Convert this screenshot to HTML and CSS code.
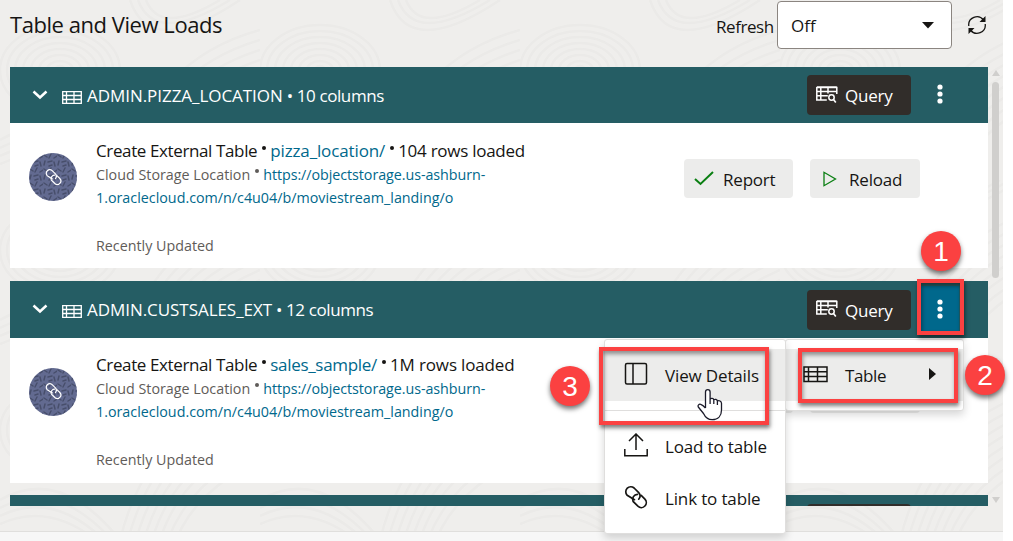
FILE: index.html
```html
<!DOCTYPE html>
<html lang="en">
<head>
<meta charset="utf-8">
<title>Table and View Loads</title>
<link rel="stylesheet" href="styles.css">
</head>
<body>
<svg class="defs" width="0" height="0" aria-hidden="true">
  <defs>
    <pattern id="rings" width="260" height="180" patternUnits="userSpaceOnUse">
      <g fill="none" stroke="#ebeae8" stroke-width="2.500">
        <ellipse cx="60" cy="70" rx="5" ry="4"/><ellipse cx="60" cy="70" rx="13" ry="9"/><ellipse cx="60" cy="70" rx="21" ry="15"/><ellipse cx="60" cy="70" rx="29" ry="21"/><ellipse cx="60" cy="70" rx="37" ry="27"/><ellipse cx="60" cy="70" rx="45" ry="33"/><ellipse cx="60" cy="70" rx="53" ry="39"/><ellipse cx="60" cy="70" rx="60" ry="45"/>
        <path d="M120 180Q150 60 260 30M128 180Q157 70 260 40M136 180Q164 80 260 50M144 180Q170 90 260 60M152 180Q176 100 260 70M160 180Q182 110 260 80M168 180Q190 120 260 90M176 180Q196 130 260 100M130 0Q150 60 240 0M138 0Q155 46 230 0M146 0Q160 36 220 0M0 140Q60 105 120 180M0 148Q56 118 112 180M0 156Q52 130 104 180M0 164Q48 142 96 180"/>
      </g>
    </pattern>
    <pattern id="dashes" width="14" height="14" patternUnits="userSpaceOnUse">
      <path d="M1 2l3 2M8 1l-2 4M11 5l3-2M2 8l-1 4M5 9l4-1M11 9l1 4M6 13l3-1" stroke="#474e6b" stroke-width="1.500" fill="none" stroke-linecap="round"/>
    </pattern>
    <symbol id="i-chev" viewBox="0 0 16 10"><path d="M1.500 1.500L8 7.500l6.500-6" fill="none" stroke="currentColor" stroke-width="2.500"/></symbol>
    <symbol id="i-table" viewBox="0 0 25 17"><path d="M1 1h23v14.500H1zM1 5.700h23M1 10.500h23M5.500 1v14.500M14.500 1v14.500" fill="none" stroke="currentColor" stroke-width="1.500"/></symbol>
    <symbol id="i-tables" viewBox="0 0 20 13"><path d="M.7.7h18.600v11.600H.7zM.7 4.500h18.600M.7 8.500h18.600M4.500.7v11.600M12 .7v11.600" fill="none" stroke="currentColor" stroke-width="1.300"/></symbol>
    <symbol id="i-query" viewBox="0 0 22 18"><path d="M.8 1.500h20v6.500M.8 1v13h10M.8 5.500h20M.8 9.700h11M4.800 1.500V14M12 1.500v6M.8 1h20" fill="none" stroke="currentColor" stroke-width="1.500"/><circle cx="15.500" cy="11.500" r="2.700" fill="none" stroke="currentColor" stroke-width="1.500"/><path d="M17.300 13.300l2.500 3.200" stroke="currentColor" stroke-width="1.600"/></symbol>
    <symbol id="i-dots" viewBox="0 0 6 20"><g fill="currentColor"><circle cx="3" cy="3" r="2.600"/><circle cx="3" cy="10" r="2.600"/><circle cx="3" cy="17" r="2.600"/></g></symbol>
    <symbol id="i-link" viewBox="0 0 24 24"><g fill="none" stroke="currentColor" stroke-width="1.700" stroke-linecap="round"><path d="M10.500 14.700L3.200 10.300A5 5 0 0 1 3.300 3.200a5 5 0 0 1 6.800-.2l4.600 4.600a5 5 0 0 1 0 6.600"/><path d="M13.500 9.300a5 5 0 0 0-4.400 7.100l4.800 4.800a5 5 0 0 0 7-.2 5 5 0 0 0 0-6.900l-3.700-3.700"/></g></symbol>
    <symbol id="i-check" viewBox="0 0 20 15"><path d="M1 8l5.500 5L19 1" fill="none" stroke="currentColor" stroke-width="2"/></symbol>
    <symbol id="i-play" viewBox="0 0 14 16"><path d="M1 1.300v13.400L12.500 8z" fill="none" stroke="currentColor" stroke-width="1.300"/></symbol>
  </defs>
</svg>
<main class="page">
  <svg class="backdrop" aria-hidden="true"><rect width="100%" height="100%" fill="url(#rings)"/></svg>
  <header class="topbar">
    <h1 class="title">Table and View Loads</h1>
    <label class="refresh-label">Refresh</label>
    <div class="select"><span>Off</span><svg width="12" height="7"><path d="M0 0h12L6 6.500z" fill="#161513"/></svg></div>
    <svg class="reload-icon" width="20" height="20" viewBox="0 0 20 20"><g fill="none" stroke="#161513" stroke-width="1.300"><path d="M1.800 11A8.200 8.200 0 0 1 16.500 5M18.200 9A8.200 8.200 0 0 1 3.500 15"/></g><path d="M18.500 1v6h-6zM1.500 19v-6h6z" fill="#161513"/></svg>
  </header>
  <div class="scroller">
    <div class="list">
      <section class="card">
        <div class="card-head">
          <svg class="chev" width="16" height="10"><use href="#i-chev"/></svg>
          <svg class="tbl" width="20" height="13"><use href="#i-tables"/></svg>
          <h2 class="name"><span class="n1">ADMIN.PIZZA_LOCATION</span> • 10 columns</h2>
          <button class="query"><svg width="22" height="18"><use href="#i-query"/></svg><span>Query</span></button>
          <button class="more"><svg width="6" height="20"><use href="#i-dots"/></svg></button>
        </div>
        <div class="card-body">
          <svg class="avatar" width="48" height="48"><circle cx="24" cy="24" r="24" fill="#626a90"/><circle cx="24" cy="24" r="24" fill="url(#dashes)"/><use href="#i-link" x="16" y="15.500" width="17" height="17" color="#fff"/></svg>
          <div class="info">
            <p class="line main"><span class="job">Create External Table</span><i class="dot"></i><a class="src s1">pizza_location/</a><i class="dot"></i><span class="rows r1">104 rows loaded</span></p>
            <p class="line sub"><span class="loc">Cloud Storage Location</span><i class="dot small"></i><a class="u1">https://objectstorage.us-ashburn-</a></p>
            <p class="line sub"><a class="u2">1.oraclecloud.com/n/c4u04/b/moviestream_landing/o</a></p>
            <p class="line note">Recently Updated</p>
          </div>
          <div class="actions">
            <button class="btn report"><svg width="20" height="15"><use href="#i-check"/></svg><span>Report</span></button>
            <button class="btn reload"><svg width="14" height="16"><use href="#i-play"/></svg><span>Reload</span></button>
          </div>
        </div>
      </section>
      <section class="card second">
        <div class="card-head">
          <svg class="chev" width="16" height="10"><use href="#i-chev"/></svg>
          <svg class="tbl" width="20" height="13"><use href="#i-tables"/></svg>
          <h2 class="name"><span class="n2">ADMIN.CUSTSALES_EXT</span> • 12 columns</h2>
          <button class="query"><svg width="22" height="18"><use href="#i-query"/></svg><span>Query</span></button>
          <button class="more active"><svg width="6" height="20"><use href="#i-dots"/></svg></button>
        </div>
        <div class="card-body">
          <svg class="avatar" width="48" height="48"><circle cx="24" cy="24" r="24" fill="#626a90"/><circle cx="24" cy="24" r="24" fill="url(#dashes)"/><use href="#i-link" x="16" y="14.500" width="17" height="17" color="#fff"/></svg>
          <div class="info">
            <p class="line main"><span class="job">Create External Table</span><i class="dot"></i><a class="src s2">sales_sample/</a><i class="dot"></i><span class="rows r2">1M rows loaded</span></p>
            <p class="line sub"><span class="loc">Cloud Storage Location</span><i class="dot small"></i><a class="u1">https://objectstorage.us-ashburn-</a></p>
            <p class="line sub"><a class="u2">1.oraclecloud.com/n/c4u04/b/moviestream_landing/o</a></p>
            <p class="line note">Recently Updated</p>
          </div>
          <div class="actions">
            <button class="btn report" aria-label="Report"></button>
            <button class="btn reload" aria-label="Reload"></button>
          </div>
        </div>
      </section>
      <section class="card third"><div class="card-head"><div class="query"></div></div></section>
    </div>
    <div class="scrollbar">
      <svg width="8" height="6"><path d="M0 6L4 0l4 6z" fill="#d0cfcd"/></svg>
      <div class="thumb"></div>
      <svg class="down" width="8" height="6"><path d="M0 0l4 6 4-6z" fill="#d0cfcd"/></svg>
    </div>
  </div>
  <footer class="foot"></footer>
</main>

<div class="menu menu-main">
  <div class="item on"><svg width="25" height="17"><use href="#i-table"/></svg><span class="t-table">Table</span><svg class="arrow" width="7" height="12"><path d="M0 0v12l7-6z" fill="#161513"/></svg></div>
</div>
<div class="menu menu-sub">
  <div class="item on"><svg width="24" height="24" viewBox="0 0 24 24"><rect x="1.500" y="1.500" width="21" height="20.500" rx="1.500" fill="none" stroke="#161513" stroke-width="1.500"/><path d="M9 1.500V22" stroke="#161513" stroke-width="1.500"/></svg><span class="t-view">View Details</span></div>
  <hr class="sep">
  <div class="item"><svg width="24" height="24" viewBox="0 0 24 24"><path d="M.8 16v6.700h22.400V16M12 17V1.500M5 8l7-7 7 7" fill="none" stroke="#161513" stroke-width="1.500"/></svg><span class="t-load">Load to table</span></div>
  <div class="item"><svg width="24" height="24"><use href="#i-link"/></svg><span class="t-link">Link to table</span></div>
</div>
<div class="mark m1"></div>
<div class="mark m2"></div>
<div class="mark m3"></div>
<div class="step p1">1</div>
<div class="step p2">2</div>
<div class="step p3">3</div>
<svg class="cursor" width="26" height="33" viewBox="0 0 26 33"><path d="M8.500 20V4a2.300 2.300 0 0 1 4.600 0v7c1-1 3.300-.8 3.700.8 1.200-.9 3.300-.4 3.600 1.200 1.700-.7 3.900 0 4.100 2.200V22c0 6-3.500 9.700-9.300 9.700-4.800 0-7.200-3-8.700-6.200L1.300 19c-.8-1.700.7-3.200 2.400-2.700 2 .6 3.300 2 4.800 3.700M13.100 11v5M16.800 12v4M20.400 13v4" fill="#fff" stroke="#1b1b2a" stroke-width="1.300" stroke-linejoin="round"/></svg>
</body>
</html>
```

FILE: styles.css
```css
* { box-sizing: border-box; }
body { margin: 0; width: 1013px; height: 541px; overflow: hidden; position: relative; background: #fff; color: #161513; font-family: "Open Sans", "Noto Sans", sans-serif; font-size: 17px; }
h1, h2, p { margin: 0; font-weight: 400; }
svg { display: block; flex: none; }
button { border: 0; padding: 0; font: inherit; }
.defs { position: absolute; }
.page { width: 1003px; height: 541px; display: flex; flex-direction: column; background: #efeeec; position: relative; }
.backdrop { position: absolute; inset: 0; width: 100%; height: 100%; }
.topbar, .scroller, .foot { position: relative; }
.topbar { height: 67px; display: flex; align-items: flex-start; padding-left: 10px; white-space: nowrap; }
.title { width: 706px; font-size: 22px; line-height: 30px; padding-top: 9px; letter-spacing: -.45px; }
.refresh-label { width: 61px; line-height: 26px; padding-top: 14px; letter-spacing: -.45px; }
.select { width: 175px; height: 48px; margin-top: 1px; padding: 0 17px 0 13px; border: 1px solid #8b8580; border-radius: 4px; background: #fff; display: flex; align-items: center; justify-content: space-between; }
.reload-icon { margin: 15px 0 0 15px; }
.scroller { height: 439px; display: flex; padding-left: 10px; overflow: hidden; }
.list { width: 978px; flex: none; display: flex; flex-direction: column; gap: 13px; }
.card { flex: none; background: #fff; }
.card-head { height: 56px; background: #255d64; color: #fff; display: flex; align-items: center; padding-left: 22px; }
.second .card-head { height: 57px; }
.chev { margin-top: -1px; }
.tbl { margin: 4px 5px 0 14px; }
.name { width: 720px; font-size: 17px; white-space: nowrap; line-height: 24px; margin-top: 1px; letter-spacing: -.4px; }
.n1 { letter-spacing: -.05px; }
.n2 { letter-spacing: -.05px; }
.query { width: 104px; height: 40px; border-radius: 4px; background: #312d2a; color: #fff; display: flex; align-items: center; gap: 7px; padding-left: 9px; }
.query span { padding-top: 1px; letter-spacing: -.2px; }
.query svg { margin-top: -1px; }
.more { width: 39px; height: 48px; margin-left: 9px; background: none; color: #fff; display: flex; align-items: center; justify-content: center; }
.more svg { margin-top: -2px; }
.more.active { background: #00688c; }
.card-body { height: 145px; display: flex; align-items: flex-start; padding: 16px 0 0 19px; }
.avatar { margin-top: 14px; }
.info { width: 588px; padding-left: 19px; white-space: nowrap; }
.second .info { margin-top: -1px; }
.line { height: 23px; line-height: 24px; display: flex; }
.main { height: 24px; }
.job { letter-spacing: -.38px; }
.s1 { letter-spacing: -.13px; }
.s2 { letter-spacing: -.3px; }
.r1 { letter-spacing: -.27px; }
.r2 { letter-spacing: -.15px; }
.sub, .note { font-size: 14.3px; color: #5f5c59; }
.u1 { letter-spacing: -.06px; }
.note { margin-top: 25px; }
.line a { color: #00688c; }
.dot { width: 4px; height: 4px; border-radius: 50%; background: #161513; margin: 7px 4px 0 5px; }
.dot.small { background: #5f5c59; margin: 6px 4px 0 5px; }
.actions { display: flex; gap: 17px; padding: 20px 0 0 0; margin-left: 19px; }
.btn { width: 109px; height: 39px; border-radius: 4px; background: #ececeb; display: flex; align-items: center; color: #161513; }
.btn svg { color: #0a7f12; }
.report { padding-left: 10px; gap: 9px; }
.reload { width: 110px; padding-left: 13px; gap: 12px; }
.btn span { padding-top: 2px; letter-spacing: -.2px; }
.third { margin-top: -1px; }
.third .card-head { align-items: flex-start; }
.third .query { margin: 9px 0 0 775px; }
.scrollbar { width: 15px; padding: 3px 0 3px 0; display: flex; flex-direction: column; align-items: center; }
.thumb { width: 7px; height: 196px; margin-top: 6px; border-radius: 4px; background: #d0cfcd; }
.down { margin-top: auto; }
.foot { margin-top: 25px; flex: 1; border-top: 1px solid #e0dfdd; background: #f7f7f7; }
.menu { position: absolute; background: #fff; border: 1px solid #dfdedd; border-radius: 3px; box-shadow: 0 4px 8px rgba(0,0,0,.16); padding-top: 9px; white-space: nowrap; }
.menu-main { left: 785px; top: 339px; width: 179px; height: 72px; }
.menu-sub { left: 604px; top: 339px; width: 182px; height: 195px; }
.item { height: 52px; display: flex; align-items: center; gap: 17px; padding-left: 19px; }
.item svg { margin-top: -2px; }
.item.on { background: #ececeb; }
.item span { letter-spacing: -.15px; }
.menu-main .item { padding-left: 17px; }
.menu-main .item span { letter-spacing: -.4px; }
.menu-main .arrow { margin-left: 26px; }
.sep { margin: 9px 0 9px; border: 0; border-top: 1px solid #dfdedd; }
.mark { position: absolute; border: 4px solid #fb4141; box-shadow: 1px 3px 4px rgba(0,0,0,.5), inset 1px 3px 4px rgba(0,0,0,.4); }
.m1 { left: 917px; top: 279px; width: 47px; height: 56px; }
.m2 { left: 798px; top: 348px; width: 160px; height: 55px; }
.m3 { left: 599px; top: 347px; width: 170px; height: 78px; }
.step { position: absolute; width: 40px; height: 40px; border-radius: 50%; background: #fb4141; color: #fff; font: 28px/41px "Liberation Sans", Arial, sans-serif; text-align: center; box-shadow: 0 3px 5px rgba(0,0,0,.55); }
.p1 { left: 921px; top: 231px; }
.p2 { left: 965px; top: 355px; }
.p3 { left: 550px; top: 366px; }
.cursor { position: absolute; left: 697px; top: 388px; }
```
